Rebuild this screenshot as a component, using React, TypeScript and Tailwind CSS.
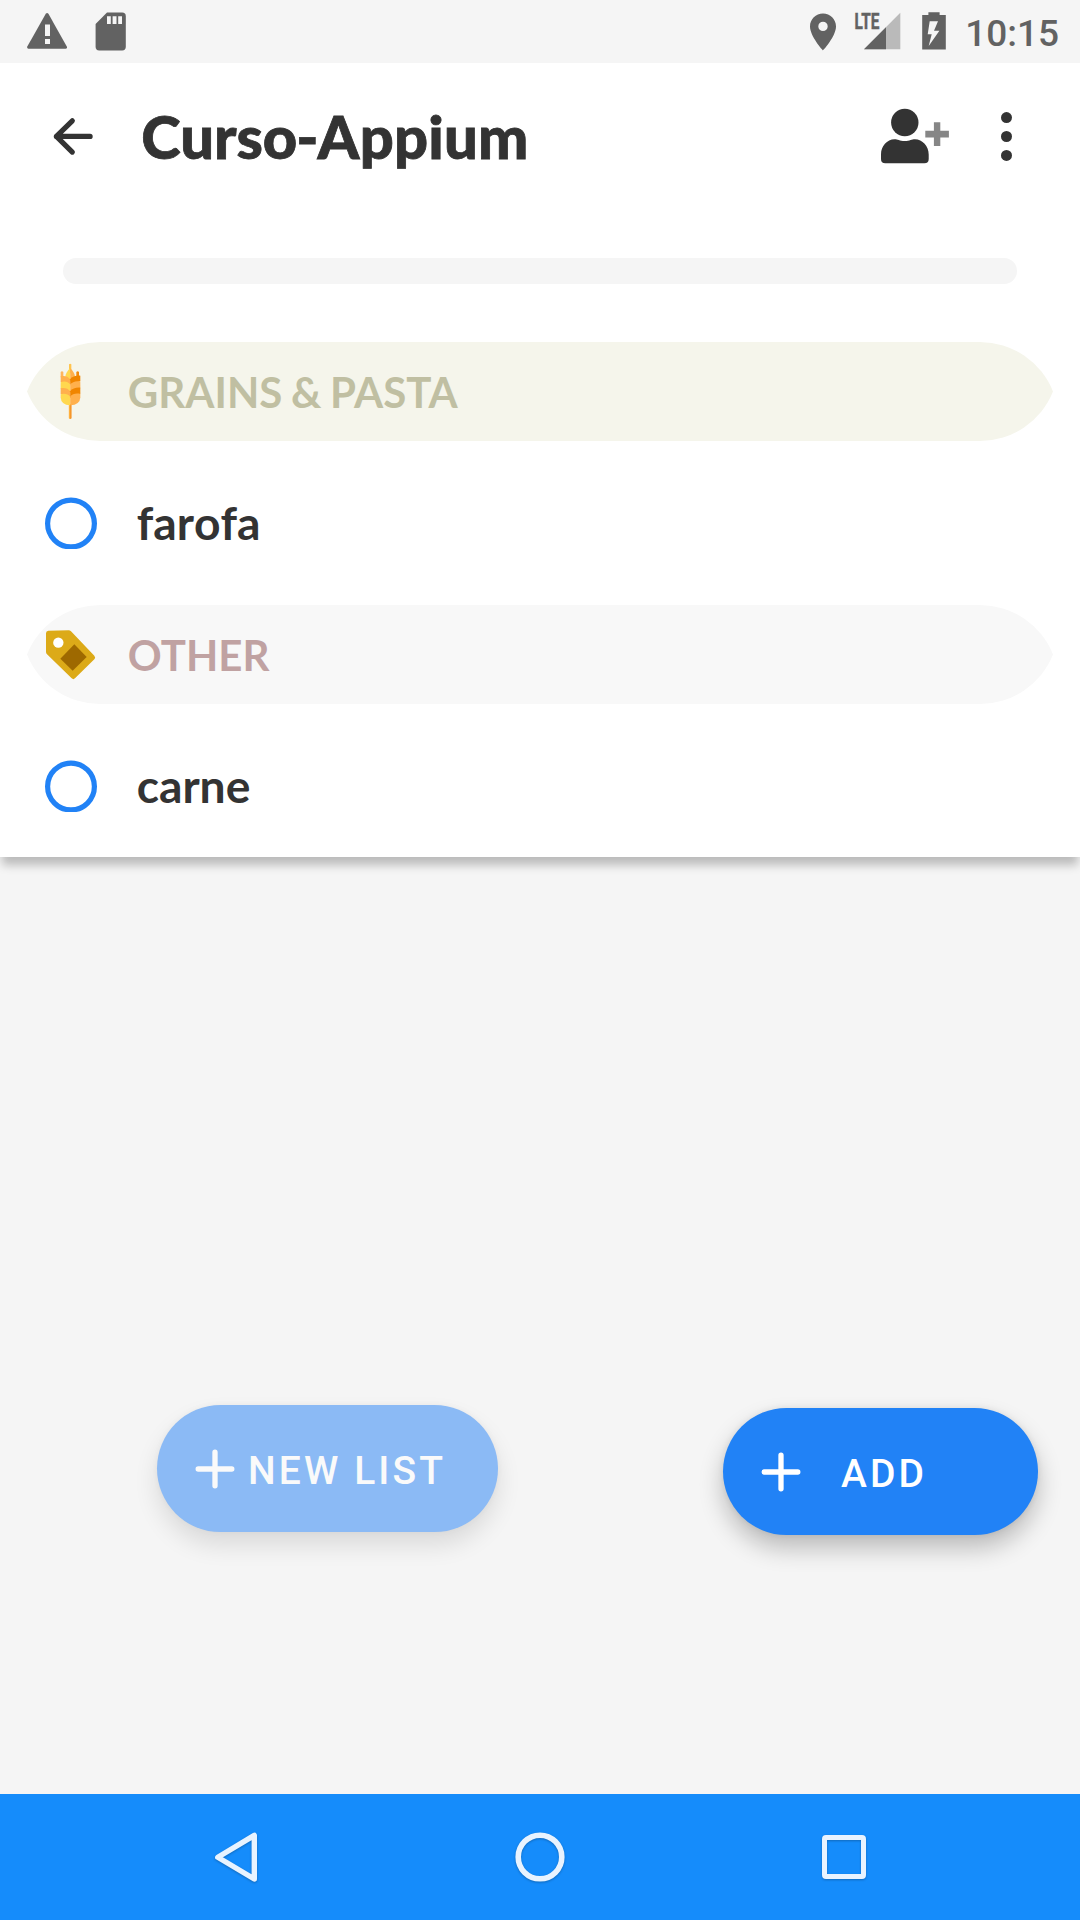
import type { ReactNode } from 'react';

function StatusBar() {
  return (
    <div className="flex h-[63px] shrink-0 items-start bg-[#f5f5f5] pl-[24px] pr-[21px] text-[#626262]">
      <svg className="h-[63px] w-[46px]" viewBox="24 0 46 63" fill="currentColor">
        <path d="M45.8 13.8q1.3-1.6 2.6 0L66.8 46.400q.9 2-1.200 2.400H28.400q-2-.4-1.100-2.400z" />
        <path d="M45 24.500h5V36h-5zM45 39h5v5h-5z" fill="#f5f5f5" />
      </svg>
      <svg className="ml-[20px] h-[63px] w-[40px]" viewBox="90 0 40 63" fill="currentColor">
        <path d="M107 12.600h15.200q3.600 0 3.600 3.600v30.600q0 3.600-3.600 3.600h-23q-3.600 0-3.600-3.600V24z" />
        <path d="M107 16.300h3.800V24H107zM112.600 16.300h3.900V24h-3.900zM118.200 16.300h3.800V24h-3.800z" fill="#f5f5f5" />
      </svg>
      <div className="flex-1" />
      <svg className="h-[63px] w-[36px]" viewBox="805 0 36 63" fill="currentColor">
        <path
          fillRule="evenodd"
          d="M823 13.500c-7.200 0-13 5.800-13 13C810 36.300 823 50.500 823 50.500s13-14.200 13-24c0-7.200-5.800-13-13-13zm0 8.200a4.700 4.700 0 1 1 0 9.400a4.700 4.700 0 1 1 0-9.400z"
        />
      </svg>
      <svg className="ml-[9px] h-[63px] w-[56px]" viewBox="850 0 56 63" fill="currentColor">
        <path d="M900.300 12.800V49.200H864z" fill="#bababa" />
        <path d="M886 27.200v22h-22z" />
        <text
          x="0"
          y="0"
          transform="translate(854.600 29) scale(.7 1)"
          className="font-['Roboto',sans-serif] text-[22px] font-bold"
          stroke="currentColor"
          strokeWidth="0.5"
        >
          LTE
        </text>
      </svg>
      <svg className="ml-[10px] h-[63px] w-[36px]" viewBox="916 0 36 63" fill="currentColor">
        <path d="M928.400 12.300h11.200V15h6.200v34.600h-23.600V15h6.200z" />
        <path d="M929.700 21.300h8.300l-4 9.400h5.400L928.700 46l3-11.700h-4z" fill="#f5f5f5" />
      </svg>
      <span className="ml-[12.800px] mt-[12px] font-['Roboto',sans-serif] text-[37px] font-medium leading-[43px]">10:15</span>
    </div>
  );
}

function Header() {
  return (
    <header className="flex h-[146px] shrink-0 items-center text-[#333333]">
      <button className="ml-[49px]" aria-label="Back">
        <svg className="h-[48px] w-[48px]" viewBox="49 112 48 48" fill="none" stroke="currentColor" strokeWidth="5.2" strokeLinecap="round" strokeLinejoin="round">
          <path d="M72.300 120.800L56.400 136.400l15.900 15.700M56.400 136.400h33.700" />
        </svg>
      </button>
      <h1 className="ml-[44.200px] flex-1 whitespace-nowrap font-['Lato',sans-serif] text-[59.700px] font-black leading-[72px] [-webkit-text-stroke:0.8px_#333333]">
        Curso<span className="-ml-[1px] -mr-[1px]">-</span><span className="tracking-[0.200px]">Appium</span>
      </h1>
      <button aria-label="Add person">
        <svg className="h-[60px] w-[74px]" viewBox="878 106 74 60" fill="currentColor">
          <circle cx="904.800" cy="122.500" r="13.700" />
          <path d="M881 154.500c0-8.500 6-15 13.500-15.200 3.200 0 5 1.700 10.200 1.700s7-1.700 10.200-1.700c7.600.2 13.800 6.700 13.800 15.200v4.500q0 4.300-4.300 4.300h-39.100q-4.300 0-4.300-4.300z" />
          <path d="M933.900 122.200h6.400v8.600h8.600v6.700h-8.600v8.400h-6.400v-8.400h-8.600v-6.700h8.600z" fill="#868686" />
        </svg>
      </button>
      <button className="ml-[42px] mr-[62px]" aria-label="More options">
        <svg className="h-[60px] w-[24px]" viewBox="994 106 24 60" fill="currentColor">
          <circle cx="1006.500" cy="117.600" r="5.500" />
          <circle cx="1006.500" cy="136.500" r="5.500" />
          <circle cx="1006.500" cy="155.400" r="5.500" />
        </svg>
      </button>
    </header>
  );
}

function WheatIcon() {
  return (
    <svg className="h-[64px] w-[52px]" viewBox="73 60 156 192">
      <path d="M148 73q3.500-3 7 0V100h-7z" fill="#ffc44f" />
      <path d="M151.500 84C144 92 137 101 137 111q0 8 14.500 14z" fill="#ffd84f" />
      <path d="M151.500 84C159 92 166 101 166 111q0 8-14.500 14z" fill="#ffb04d" />
      <path d="M123 96q4-4 8 0v16h-8z" fill="#ffb55c" />
      <path d="M170 96q4-4 8 0v14h-8z" fill="#f08a10" />
      <path d="M147.500 192h4v45q-4 0-4-3z" fill="#ffb03d" />
      <path d="M151.500 192h4v42q0 3-4 3z" fill="#f5850a" />
      <path d="M151.500 118C146 109 133 106 123 109V126l28.500 12z" fill="#ffb04d" />
      <path d="M151.500 133C146 125 133 122 123 127V146l28.500 12z" fill="#ffd84f" />
      <path d="M151.500 154C146 145 133 142 123 145V162l28.500 12z" fill="#ffb04d" />
      <path d="M151.500 170C146 162 133 159 123 163V172q1 23 28.500 24z" fill="#ffd84f" />
      <path d="M151.500 118C157 109 170 106 182 107V124l-30.500 10z" fill="#f08500" />
      <path d="M151.500 134C157 126 170 122 182 125V145l-30.500 12z" fill="#ffb04d" />
      <path d="M151.500 154C157 145 170 142 182 143V162l-30.500 12z" fill="#f08500" />
      <path d="M151.500 170C157 162 170 159 182 162V172q-1 23-30.500 24z" fill="#ffb04d" />
    </svg>
  );
}

function TagIcon() {
  return (
    <svg className="h-[64px] w-[52px]" viewBox="132 128 156 192">
      <path
        d="M145 151L206 149.500q4 0 7 3L283 226q5 6 0 11L225 294q-5 5-10 0L141 222q-3-3-3-7V159q0-7 7-8z"
        fill="#dcaa18"
      />
      <circle cx="175" cy="187" r="15.500" fill="#ffffff" />
      <path d="M223 192l37 38-42 41-37-36z" fill="#9e6900" />
    </svg>
  );
}

type CategoryProps = { icon: ReactNode; title: string; bar: string; label: string; items: string[] };

function Category({ icon, title, bar, label, items }: CategoryProps) {
  return (
    <section>
      <div
        className={`mx-[27px] flex h-[99px] items-start [clip-path:path('M0_49.5A78.75_78.75_0_0_1_73_0H953A78.75_78.75_0_0_1_1026_49.5A78.75_78.75_0_0_1_953_99H73A78.75_78.75_0_0_1_0_49.5Z')] ${bar}`}
      >
        <span className="ml-[17.300px] mt-[18px] block">{icon}</span>
        <h2 className={`ml-[31.500px] mt-[25px] font-['Lato',sans-serif] text-[42px] font-bold leading-[50px] [word-spacing:-1.5px] ${label}`}>
          {title}
        </h2>
      </div>
      {items.map((item) => (
        <div key={item} className="flex h-[164px] items-start pl-[45px]">
          <svg className="mt-[56px] size-[52px]" viewBox="0 0 52 52" fill="none" stroke="#2182f6" strokeWidth="5.2">
            <circle cx="26" cy="26.500" r="23.400" />
          </svg>
          <span className="ml-[39.700px] mt-[53px] font-['Lato',sans-serif] text-[46.200px] font-bold leading-[56px] text-[#333333] [font-kerning:none]">
            {item}
          </span>
        </div>
      ))}
    </section>
  );
}

function PlusIcon() {
  return (
    <svg className="size-[40px]" viewBox="0 0 40 40" fill="none" stroke="currentColor" strokeWidth="5.3" strokeLinecap="round">
      <path d="M20 3.200v33.600M3.200 20h33.600" />
    </svg>
  );
}

function NavBar() {
  return (
    <nav className="flex h-[126px] shrink-0 items-center justify-between bg-[#158cfb] px-[206px] text-[#e8f3ff]">
      <svg className="h-[60px] w-[60px] drop-shadow-[0_1px_1px_rgba(0,0,0,0.25)]" viewBox="206 1827 60 60" fill="none" stroke="currentColor" strokeWidth="5.4" strokeLinejoin="round">
        <path d="M217.800 1857.300L254.300 1835.400V1879z" />
      </svg>
      <svg className="h-[60px] w-[60px] drop-shadow-[0_1px_1px_rgba(0,0,0,0.25)]" viewBox="510 1827 60 60" fill="none" stroke="currentColor" strokeWidth="5.6">
        <circle cx="540" cy="1857" r="21.800" />
      </svg>
      <svg className="h-[60px] w-[60px] drop-shadow-[0_1px_1px_rgba(0,0,0,0.25)]" viewBox="814 1827 60 60" fill="none" stroke="currentColor" strokeWidth="5">
        <rect x="824.500" y="1837.500" width="39" height="39" rx="1.500" />
      </svg>
    </nav>
  );
}

export default function App() {
  return (
    <div className="flex h-[1920px] w-[1080px] flex-col overflow-hidden bg-[#f5f5f5]">
      <StatusBar />
      <main className="flex h-[794px] shrink-0 flex-col bg-white shadow-[0_10px_9px_-2px_rgba(0,0,0,0.24)]">
        <Header />
        <div className="mx-[63px] mb-[58px] mt-[49px] h-[26px] shrink-0 rounded-full bg-[#f5f5f5]" />
        <Category icon={<WheatIcon />} title="GRAINS & PASTA" bar="bg-[#f5f5eb]" label="text-[#c0bfa2]" items={['farofa']} />
        <Category icon={<TagIcon />} title="OTHER" bar="bg-[#f8f8f8]" label="text-[#c0a2a2]" items={['carne']} />
      </main>
      <div className="mb-[259px] mt-auto flex items-start justify-between pl-[157px] pr-[42px] font-['Roboto',sans-serif] text-[39px] font-medium leading-[46px] tracking-[3.100px]">
        <button className="flex h-[127px] w-[341px] items-start rounded-full bg-[#8bbaf5] text-[#fafafa] shadow-[0_13px_24px_rgba(0,0,0,0.11),0_0_6px_rgba(0,0,0,0.04)]">
          <span className="ml-[38px] mt-[43.700px]"><PlusIcon /></span>
          <span className="ml-[13px] mt-[43px] whitespace-nowrap">NEW LIST</span>
        </button>
        <button className="mt-[3px] flex h-[127px] w-[315px] items-start rounded-full bg-[#2182f6] text-white shadow-[0_13px_24px_rgba(0,0,0,0.24),0_0_6px_rgba(0,0,0,0.08)]">
          <span className="ml-[38px] mt-[43.700px]"><PlusIcon /></span>
          <span className="ml-[40px] mt-[43px]">ADD</span>
        </button>
      </div>
      <NavBar />
    </div>
  );
}
